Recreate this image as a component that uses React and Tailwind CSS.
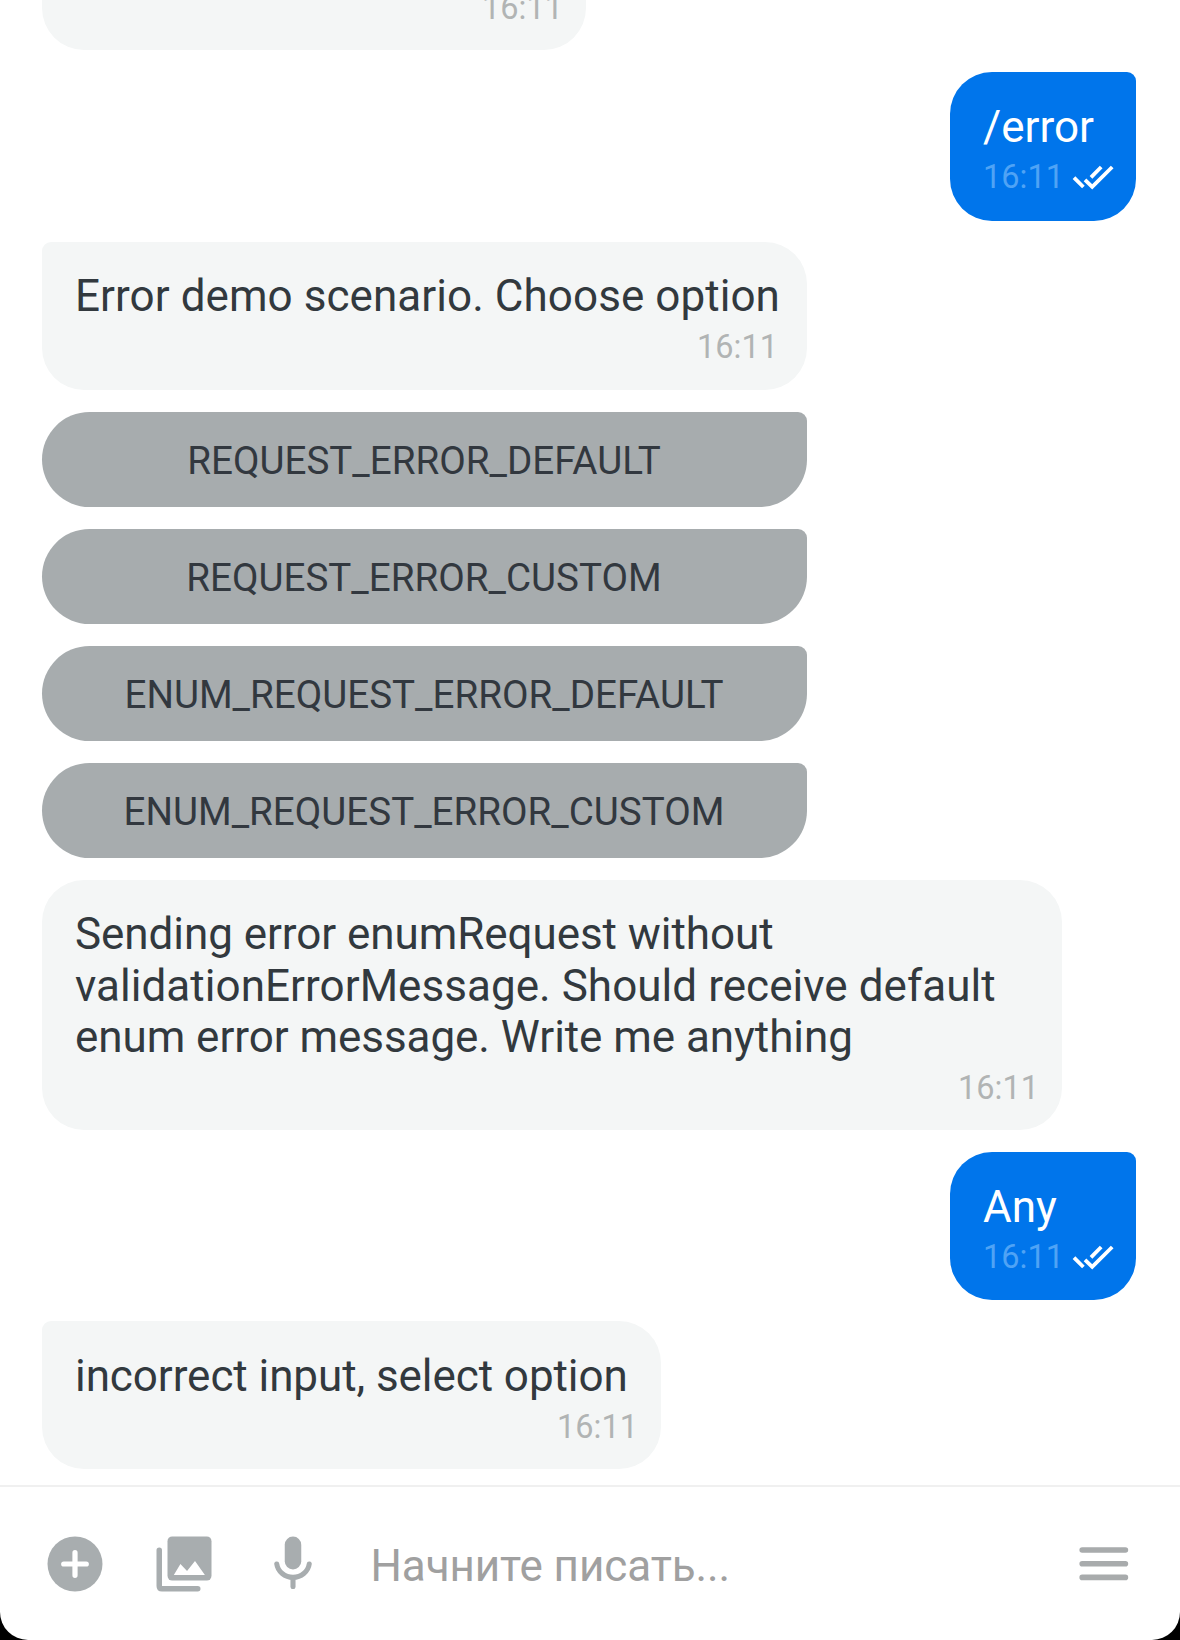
import React from "react";

const OPTIONS = [
  "REQUEST_ERROR_DEFAULT",
  "REQUEST_ERROR_CUSTOM",
  "ENUM_REQUEST_ERROR_DEFAULT",
  "ENUM_REQUEST_ERROR_CUSTOM",
];

function DoubleCheck() {
  return (
    <svg className="mb-[2px] ml-[6px] h-[28px] w-[46px] shrink-0" viewBox="0 0 46 28" fill="none" stroke="#fff" strokeWidth="3.8" strokeLinecap="butt">
      <path d="M4 14.6L13.4 24M15 16.8L22.2 23.8L42.2 4M21 14.4L31.2 4" />
    </svg>
  );
}

function Incoming({ lines, className, timeClass = "mr-[23px]" }) {
  return (
    <div className={"flex shrink-0 flex-col bg-[#f4f6f6] pl-[33px] " + className}>
      {lines.map(([text, tracking]) => (
        <p key={text} className={"h-[51.5px] text-[44px] leading-[51.5px] whitespace-nowrap text-[#32393e] " + tracking}>{text}</p>
      ))}
      <time className={"mt-[5px] self-end text-[32.5px] leading-[39px] text-[#b1b4b4] " + timeClass}>16:11</time>
    </div>
  );
}

function Outgoing({ text, className }) {
  return (
    <div className={"flex w-[186px] shrink-0 flex-col self-end rounded-[42px] rounded-tr-[9px] bg-[#0075eb] pt-[30px] pl-[33px] " + className}>
      <p className="h-[51.5px] text-[44px] leading-[51.5px] whitespace-nowrap text-white">{text}</p>
      <div className="mt-[4.5px] flex items-center">
        <time className="text-[32.5px] leading-[39px] text-[#4fa3f5]">16:11</time>
        <DoubleCheck />
      </div>
    </div>
  );
}

function PlusIcon() {
  return (
    <svg className="size-[66px]" viewBox="0 0 24 24">
      <circle cx="12" cy="12" r="10" fill="#a8adaf" />
      <path d="M12 7.9v8.2M7.9 12h8.2" stroke="#fff" strokeWidth="1.9" strokeLinecap="round" />
    </svg>
  );
}

function GalleryIcon() {
  return (
    <svg className="size-[66px]" viewBox="0 0 24 24">
      <rect x="6" y="2" width="16" height="16" rx="1.7" fill="#a8adaf" />
      <path d="M8.3 16L10.7 12L13.1 14.5L16 10.9L19.6 16Z" fill="#fff" />
      <path d="M3 7v13q0 1 1 1h13" fill="none" stroke="#a8adaf" strokeWidth="2" strokeLinecap="round" />
    </svg>
  );
}

function MicIcon() {
  return (
    <svg className="size-[66px]" viewBox="0 0 24 24" fill="none" stroke="#a8adaf" strokeWidth="1.85">
      <rect x="9" y="2" width="6" height="12" rx="3" fill="#a8adaf" stroke="none" />
      <path d="M6.1 12a5.95 5.6 0 0 0 11.8 0" strokeLinecap="round" />
      <path d="M12 17v3.2" strokeLinecap="round" />
    </svg>
  );
}

function MenuIcon() {
  return (
    <svg className="h-[34px] w-[50px]" viewBox="0 0 50 34" stroke="#a8abac" strokeWidth="5.6" strokeLinecap="round">
      <path d="M3.2 3h43.2M3.2 16.7h43.2M3.2 30.4h43.2" />
    </svg>
  );
}

export default function App() {
  return (
    <div className="h-[1640px] w-[1180px] overflow-hidden bg-black" style={{ fontFamily: "Roboto, sans-serif" }}>
      <div className="flex h-full flex-col rounded-b-[28px] bg-white">
        <main className="flex h-[1485px] shrink-0 flex-col items-start overflow-hidden pr-[44px] pl-[42px]">
          <div className="flex h-[50px] w-[544px] shrink-0 items-end justify-end rounded-b-[42px] bg-[#f4f6f6] pr-[23px] pb-[22px]">
            <time className="text-[32.5px] leading-[39px] text-[#b1b4b4]">16:11</time>
          </div>
          <Outgoing text="/error" className="mt-[22px] h-[149px]" />
          <Incoming
            lines={[["Error demo scenario. Choose option", "tracking-[0.06px]"]]}
            className="mt-[21px] h-[148px] w-[765px] rounded-[42px] rounded-tl-[9px] pt-[29px]"
            timeClass="mr-[29px]"
          />
          <div className="mt-[22px] flex w-[765px] shrink-0 flex-col gap-[22px]">
            {OPTIONS.map((o) => (
              <button key={o} className="h-[95px] rounded-[47.5px] rounded-tr-[9px] bg-[#a7acae] pt-[3px] pr-[1px] text-[38.6px] text-[#32383f]">{o}</button>
            ))}
          </div>
          <Incoming
            lines={[
              ["Sending error enumRequest without", "tracking-[-0.06px]"],
              ["validationErrorMessage. Should receive default", "tracking-[0.045px]"],
              ["enum error message. Write me anything", "tracking-[-0.055px]"],
            ]}
            className="mt-[22px] h-[250px] w-[1020px] rounded-[42px] pt-[29px]"
          />
          <Outgoing text="Any" className="mt-[22px] h-[148px]" />
          <Incoming
            lines={[["incorrect input, select option", "tracking-[-0.07px]"]]}
            className="mt-[21px] h-[148px] w-[619px] rounded-[42px] rounded-tl-[9px] pt-[30px]"
          />
        </main>
        <footer className="flex h-[155px] shrink-0 items-center border-t-2 border-[#f0f0f0] pl-[42px] pr-[51px]">
          <div className="flex items-center gap-[43px]">
            <PlusIcon />
            <GalleryIcon />
            <MicIcon />
          </div>
          <span className="ml-[44.5px] grow pt-[4px] text-[44px] leading-[52px] tracking-[-0.08px] text-[#a0a0a0]">Начните писать...</span>
          <MenuIcon />
        </footer>
      </div>
    </div>
  );
}
